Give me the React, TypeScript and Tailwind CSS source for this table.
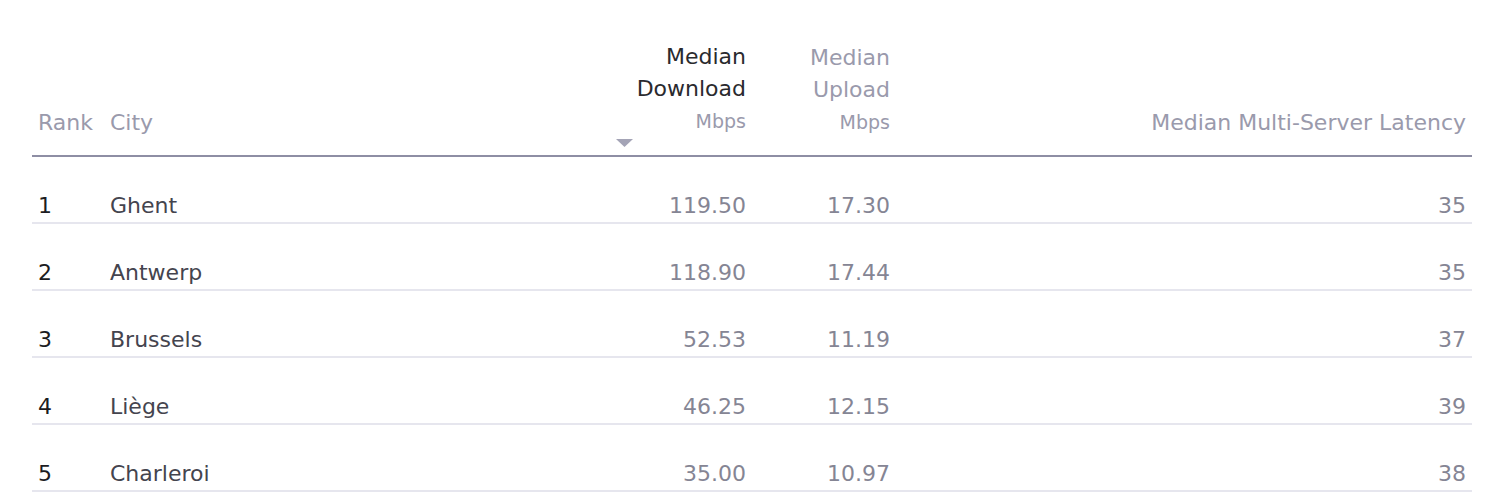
const rows = [
  { rank: 1, city: "Ghent", down: "119.50", up: "17.30", latency: "35" },
  { rank: 2, city: "Antwerp", down: "118.90", up: "17.44", latency: "35" },
  { rank: 3, city: "Brussels", down: "52.53", up: "11.19", latency: "37" },
  { rank: 4, city: "Liège", down: "46.25", up: "12.15", latency: "39" },
  { rank: 5, city: "Charleroi", down: "35.00", up: "10.97", latency: "38" },
]

export default function App() {
  return (
    <div className="h-[500px] overflow-hidden bg-white pl-[32px] pr-[19px] pt-[41px] font-['DejaVu_Sans',sans-serif] text-[22px] leading-8 text-[#3a3a46]">
      <div className="grid grid-cols-[72px_506px_142px_144px_1fr] items-end border-b-2 border-[#8e8ea4]">
        <div className="px-1.5 pb-[16px] text-[#9a9aac]">Rank</div>
        <div className="px-1.5 pb-[16px] text-[#9a9aac]">City</div>
        <div className="flex flex-col px-1.5 pb-[8px]">
          <span className="text-right text-[#2a2a2e]">Median</span>
          <span className="text-right text-[#2a2a2e]">Download</span>
          <span className="text-right text-[19px] text-[#9a9aac]">Mbps</span>
          <svg className="mt-[2px]" width="17" height="8" viewBox="0 0 17 8">
            <path d="M0 0 L17 0 L8.5 8 Z" fill="#a4a4b6" />
          </svg>
        </div>
        <div className="flex flex-col px-1.5 pb-[17px] text-right text-[#9a9aac]">
          <span>Median</span>
          <span>Upload</span>
          <span className="text-[19px]">Mbps</span>
        </div>
        <div className="px-1.5 pb-[16px] text-right text-[#9a9aac]">Median Multi-Server Latency</div>
      </div>
      {rows.map((r) => (
        <div
          key={r.rank}
          className="grid h-[67px] grid-cols-[72px_506px_142px_144px_1fr] items-end border-b-2 border-[#e6e6ee]"
        >
          <div className="px-1.5 text-[#1c1c22]">{r.rank}</div>
          <div className="px-1.5 text-[#44444e]">{r.city}</div>
          <div className="px-1.5 text-right text-[#858594]">{r.down}</div>
          <div className="px-1.5 text-right text-[#858594]">{r.up}</div>
          <div className="px-1.5 text-right text-[#858594]">{r.latency}</div>
        </div>
      ))}
    </div>
  )
}
